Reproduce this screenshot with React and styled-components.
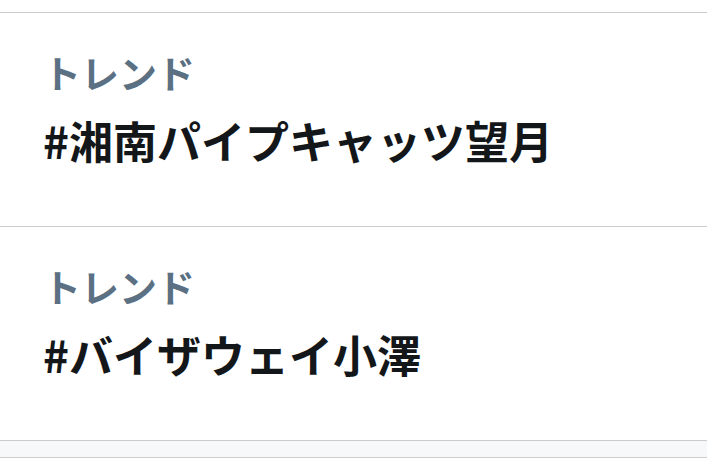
import React from "react";
import styled, { createGlobalStyle } from "styled-components";

const Global = createGlobalStyle`
  html, body { margin: 0; padding: 0; background: #ffffff; }
  body { font-family: "Noto Sans CJK JP", "Noto Sans", sans-serif; }
`;

const Page = styled.div`
  width: 707px;
  padding-top: 12px;
  background: #ffffff;
`;

const List = styled.div`
  display: flex;
  flex-direction: column;
  border-top: 1px solid #c9cbcd;
`;

const Item = styled.div`
  display: flex;
  flex-direction: column;
  gap: 16px;
  height: 214px;
  box-sizing: border-box;
  padding: 34px 20px 0 43px;
  border-bottom: 1px solid #c9cbcd;
`;

const Label = styled.div`
  font-size: 38px;
  line-height: 49px;
  font-weight: 600;
  color: #5b7083;
`;

const Title = styled.div`
  font-size: 44px;
  line-height: 57px;
  font-weight: 700;
  color: #14171a;
`;

const Band = styled.div`
  height: 16px;
  background: #f7f8fa;
  border-bottom: 1px solid #c9cbcd;
`;

const trends = ["#湘南パイプキャッツ望月", "#バイザウェイ小澤"];

export default function App() {
  return (
    <Page>
      <Global />
      <List>
        {trends.map((t) => (
          <Item key={t}>
            <Label>トレンド</Label>
            <Title>{t}</Title>
          </Item>
        ))}
        <Band />
      </List>
    </Page>
  );
}
